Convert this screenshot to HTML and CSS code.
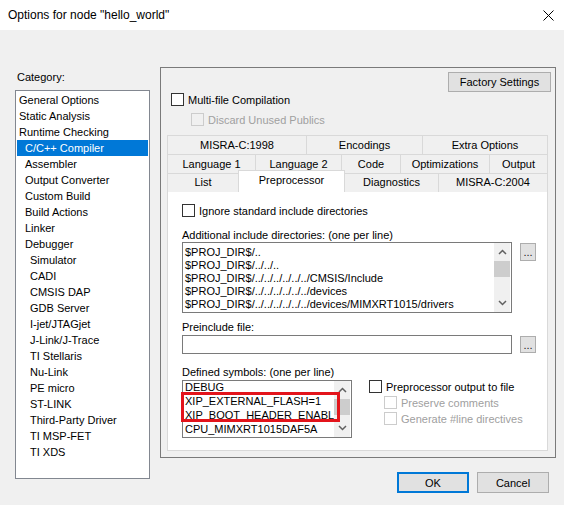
FILE: index.html
```html
<!DOCTYPE html>
<html lang="en">
<head>
<meta charset="UTF-8">
<title>Options for node "hello_world"</title>
<link rel="stylesheet" href="styles.css">
</head>
<body>
<div class="titlebar">
    <span class="title">Options for node "hello_world"</span>
    <svg class="close" width="11" height="11" viewBox="0 0 11 11">
        <path d="M0.5 0.5L10.5 10.5M10.5 0.5L0.5 10.5" stroke="#000" stroke-width="1" fill="none"/>
    </svg>
</div>
<div class="main">
    <div class="category">
        <div class="category-label">Category:</div>
        <ul class="category-list">
            <li>General Options</li>
            <li>Static Analysis</li>
            <li>Runtime Checking</li>
            <li class="sub selected">C/C++ Compiler</li>
            <li class="sub">Assembler</li>
            <li class="sub">Output Converter</li>
            <li class="sub">Custom Build</li>
            <li class="sub">Build Actions</li>
            <li class="sub">Linker</li>
            <li class="sub">Debugger</li>
            <li class="sub2">Simulator</li>
            <li class="sub2">CADI</li>
            <li class="sub2">CMSIS DAP</li>
            <li class="sub2">GDB Server</li>
            <li class="sub2">I-jet/JTAGjet</li>
            <li class="sub2">J-Link/J-Trace</li>
            <li class="sub2">TI Stellaris</li>
            <li class="sub2">Nu-Link</li>
            <li class="sub2">PE micro</li>
            <li class="sub2">ST-LINK</li>
            <li class="sub2">Third-Party Driver</li>
            <li class="sub2">TI MSP-FET</li>
            <li class="sub2">TI XDS</li>
        </ul>
    </div>
    <div class="right">
        <div class="panel">
            <div class="factory-row">
                <button class="btn factory">Factory Settings</button>
            </div>
            <div class="check multi"><span class="box"></span>Multi-file Compilation</div>
            <div class="check discard disabled"><span class="box"></span>Discard Unused Publics</div>

            <div class="tabs">
                <div class="tab-row row1">
                    <div class="tab">MISRA-C:1998</div>
                    <div class="tab">Encodings</div>
                    <div class="tab">Extra Options</div>
                </div>
                <div class="tab-row row2">
                    <div class="tab">Language 1</div>
                    <div class="tab">Language 2</div>
                    <div class="tab">Code</div>
                    <div class="tab">Optimizations</div>
                    <div class="tab">Output</div>
                </div>
                <div class="tab-row row3">
                    <div class="tab">List</div>
                    <div class="tab selected">Preprocessor</div>
                    <div class="tab">Diagnostics</div>
                    <div class="tab">MISRA-C:2004</div>
                </div>
            </div>

            <div class="page">
                <div class="check ignore"><span class="box"></span>Ignore standard include directories</div>

                <div class="field-label">Additional include directories: (one per line)</div>
                <div class="field-row">
                    <div class="listbox includes">
                        <div class="lines">
                            <div>$PROJ_DIR$/..</div>
                            <div>$PROJ_DIR$/../../..</div>
                            <div>$PROJ_DIR$/../../../../../../CMSIS/Include</div>
                            <div>$PROJ_DIR$/../../../../../../devices</div>
                            <div>$PROJ_DIR$/../../../../../../devices/MIMXRT1015/drivers</div>
                        </div>
                        <div class="scrollbar">
                            <div class="sb-btn"><svg width="9" height="6" viewBox="0 0 9 6"><path d="M1 5L4.5 1.5L8 5" stroke="#606060" stroke-width="1.5" fill="none"/></svg></div>
                            <div class="thumb"></div>
                            <div class="sb-btn down"><svg width="9" height="6" viewBox="0 0 9 6"><path d="M1 1L4.5 4.5L8 1" stroke="#606060" stroke-width="1.5" fill="none"/></svg></div>
                        </div>
                    </div>
                    <button class="browse">...</button>
                </div>

                <div class="field-label preinclude-label">Preinclude file:</div>
                <div class="field-row">
                    <div class="textbox"></div>
                    <button class="browse">...</button>
                </div>

                <div class="field-label">Defined symbols: (one per line)</div>
                <div class="symbols-row">
                    <div class="listbox symbols">
                        <div class="lines">
                            <div>DEBUG</div>
                            <div>XIP_EXTERNAL_FLASH=1</div>
                            <div>XIP_BOOT_HEADER_ENABLE=1</div>
                            <div>CPU_MIMXRT1015DAF5A</div>
                        </div>
                        <div class="scrollbar">
                            <div class="sb-btn"><svg width="9" height="6" viewBox="0 0 9 6"><path d="M1 5L4.5 1.5L8 5" stroke="#606060" stroke-width="1.5" fill="none"/></svg></div>
                            <div class="thumb"></div>
                            <div class="sb-btn down"><svg width="9" height="6" viewBox="0 0 9 6"><path d="M1 1L4.5 4.5L8 1" stroke="#606060" stroke-width="1.5" fill="none"/></svg></div>
                        </div>
                        <div class="highlight"></div>
                    </div>
                    <div class="output-options">
                        <div class="check"><span class="box"></span>Preprocessor output to file</div>
                        <div class="check nested disabled"><span class="box"></span>Preserve comments</div>
                        <div class="check nested disabled"><span class="box"></span>Generate #line directives</div>
                    </div>
                </div>
            </div>
        </div>
        <div class="footer">
            <button class="btn ok">OK</button>
            <button class="btn cancel">Cancel</button>
        </div>
    </div>
</div>
</body>
</html>
```

FILE: styles.css
```css
html, body {
    margin: 0;
    padding: 0;
}
body {
    width: 564px;
    height: 505px;
    overflow: hidden;
    background-color: #f0f0f0;
    font-family: "Liberation Sans", Arial, sans-serif;
    font-size: 11px;
    color: #000;
}
.titlebar {
    height: 30px;
    background: #fff;
    display: flex;
    align-items: center;
    justify-content: space-between;
    padding: 0 10px 0 8px;
}
.title {
    font-size: 12px;
}
.main {
    display: flex;
    align-items: flex-start;
    padding: 37px 0 0 15px;
}
.category {
    width: 135px;
}
.category-label {
    margin-top: 3px;
    line-height: 14px;
    padding-left: 2px;
}
.category-list {
    list-style: none;
    margin: 6px 0 0 0;
    padding: 1px 0;
    height: 389px;
    box-sizing: border-box;
    border: 1px solid #828790;
    background: #fff;
}
.category-list li {
    margin: 0 1px;
    height: 16px;
    line-height: 16px;
    padding-left: 2px;
    white-space: nowrap;
}
.category-list li.sub {
    padding-left: 8px;
}
.category-list li.sub2 {
    padding-left: 13px;
}
.category-list li.selected {
    background-color: #0078d7;
    color: #fff;
}
.right {
    margin-left: 10px;
    width: 396px;
}
.panel {
    box-sizing: border-box;
    width: 396px;
    height: 391px;
    border: 1px solid #7a7a7a;
}
.btn {
    font-family: inherit;
    font-size: 11px;
    color: #000;
    background-color: #e1e1e1;
    border: 1px solid #adadad;
    padding: 0;
    box-sizing: border-box;
}
.factory-row {
    display: flex;
    justify-content: flex-end;
    margin: 4px 4px 0 0;
}
.factory {
    width: 103px;
    height: 20px;
}
.check {
    display: flex;
    align-items: center;
    height: 13px;
    white-space: nowrap;
}
.check .box {
    width: 13px;
    height: 13px;
    box-sizing: border-box;
    border: 1px solid #333;
    background: #fff;
    margin-right: 4px;
    flex: none;
}
.check.disabled {
    color: #a0a0a0;
}
.check.disabled .box {
    border-color: #cccccc;
    background: transparent;
}
.multi {
    margin: 1px 0 0 10px;
}
.discard {
    margin: 7px 0 0 30px;
}
.tabs {
    margin: 9px 0 0 6px;
    width: 381px;
}
.tab-row {
    display: grid;
    height: 19px;
}
.row1 {
    grid-template-columns: 139px 116px 126px;
}
.row2 {
    grid-template-columns: 88px 86px 59px 89px 59px;
}
.row3 {
    grid-template-columns: 71px 106px 94px 110px;
    height: 18px;
}
.tab {
    box-sizing: border-box;
    border-top: 1px solid #d9d9d9;
    border-left: 1px solid #d9d9d9;
    background: #f0f0f0;
    text-align: center;
    line-height: 18px;
    white-space: nowrap;
}
.row3 .tab {
    line-height: 17px;
}
.tab:last-child {
    border-right: 1px solid #d9d9d9;
}
.row3 .tab.selected {
    position: relative;
    z-index: 1;
    height: 22px;
    margin-top: -3px;
    margin-right: -1px;
    background: #fff;
    border-right: 1px solid #d9d9d9;
    line-height: 19px;
}
.page {
    box-sizing: border-box;
    margin-left: 6px;
    width: 381px;
    height: 260px;
    border: 1px solid #d9d9d9;
    background: #fff;
    padding-left: 14px;
}
.ignore {
    padding-top: 12px;
}
.field-label {
    margin-top: 11px;
    line-height: 14px;
}
.preinclude-label {
    margin-top: 7px;
}
.field-row {
    display: flex;
    align-items: flex-start;
}
.preinclude-label + .field-row {
    margin-top: 1px;
}
.listbox {
    position: relative;
    display: flex;
    box-sizing: border-box;
    border: 1px solid #7a7a7a;
    background: #fff;
}
.listbox .lines {
    flex: 1;
    overflow: hidden;
    padding-left: 2px;
    white-space: nowrap;
}
.includes {
    width: 330px;
    height: 71px;
}
.includes .lines {
    padding-top: 3px;
    line-height: 13px;
}
.textbox {
    box-sizing: border-box;
    width: 330px;
    height: 19px;
    border: 1px solid #7a7a7a;
    background: #fff;
}
.browse {
    box-sizing: border-box;
    margin: 1px 0 0 8px;
    width: 16px;
    height: 18px;
    padding: 0;
    background: #e1e1e1;
    border: 1px solid #adadad;
    font-family: inherit;
    font-size: 11px;
    line-height: 14px;
    color: #202020;
}
.field-row .textbox + .browse {
    height: 17px;
}
.scrollbar {
    width: 16px;
    margin-right: 1px;
    background: #f0f0f0;
    display: flex;
    flex-direction: column;
}
.sb-btn {
    height: 18px;
    display: flex;
    align-items: center;
    justify-content: center;
}
.sb-btn.down {
    margin-top: auto;
}
.thumb {
    height: 16px;
    background: #cdcdcd;
}
.symbols-row {
    display: flex;
    align-items: flex-start;
    margin-top: 1px;
}
.symbols {
    width: 170px;
    height: 58px;
}
.symbols .lines {
    margin-top: -1px;
    line-height: 14px;
}
.highlight {
    position: absolute;
    left: -2px;
    top: 11px;
    width: 159px;
    height: 30px;
    box-sizing: border-box;
    border: 3px solid #e3141b;
}
.output-options {
    margin-left: 17px;
}
.output-options .nested {
    margin: 3px 0 0 15px;
}
.footer {
    display: flex;
    justify-content: flex-end;
    gap: 8px;
    margin-top: 14px;
    padding-right: 7px;
}
.footer .btn {
    width: 72px;
    height: 21px;
}
.footer .ok {
    border: 2px solid #0078d7;
}
```
